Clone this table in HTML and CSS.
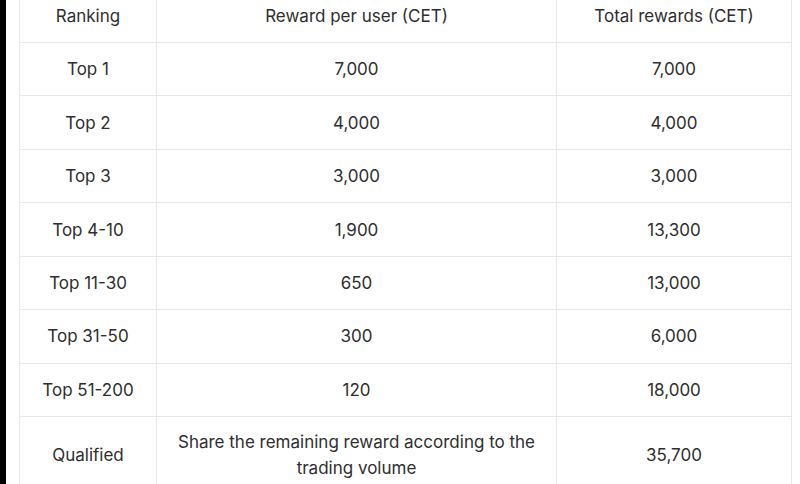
FILE: index.html
```html
<!DOCTYPE html>
<html lang="en">
<head>
<meta charset="utf-8">
<title>Rewards</title>
<link rel="stylesheet" href="styles.css">
</head>
<body>
<div class="edge"></div>
<div class="wrap">
  <table class="rewards">
    <colgroup>
      <col class="c1"><col class="c2"><col class="c3">
    </colgroup>
    <thead>
      <tr><th>Ranking</th><th>Reward per user (CET)</th><th>Total rewards (CET)</th></tr>
    </thead>
    <tbody>
      <tr><td>Top 1</td><td>7,000</td><td>7,000</td></tr>
      <tr><td>Top 2</td><td>4,000</td><td>4,000</td></tr>
      <tr><td>Top 3</td><td>3,000</td><td>3,000</td></tr>
      <tr><td>Top 4-10</td><td>1,900</td><td>13,300</td></tr>
      <tr><td>Top 11-30</td><td>650</td><td>13,000</td></tr>
      <tr><td>Top 31-50</td><td>300</td><td>6,000</td></tr>
      <tr><td>Top 51-200</td><td>120</td><td>18,000</td></tr>
      <tr class="tall"><td>Qualified</td><td>Share the remaining reward according to the trading volume</td><td>35,700</td></tr>
    </tbody>
  </table>
</div>
</body>
</html>
```

FILE: styles.css
```css
html, body {
  margin: 0;
  padding: 0;
  background: #fff;
  height: 100%;
  overflow: hidden;
}
body {
  display: flex;
  align-items: flex-start;
  font-family: Inter, "Noto Sans", "Liberation Sans", sans-serif;
  color: #2e2e2e;
}
.edge {
  width: 6px;
  height: 100vh;
  background: #000;
  flex: none;
}
.wrap {
  padding-left: 13px;
  margin-top: -11.4px;
}
.rewards {
  border-collapse: collapse;
  table-layout: fixed;
  width: 772px;
  font-size: 17px;
}
.c1 { width: 137px; }
.c2 { width: 400px; }
.c3 { width: 235px; }
.rewards th,
.rewards td {
  border: 1px solid #e8e8e8;
  text-align: center;
  vertical-align: middle;
  font-weight: 400;
  line-height: 26px;
  padding: 0 16px;
  height: 53.43px;
  box-sizing: border-box;
}
.rewards tr.tall td {
  height: 78px;
}
```
